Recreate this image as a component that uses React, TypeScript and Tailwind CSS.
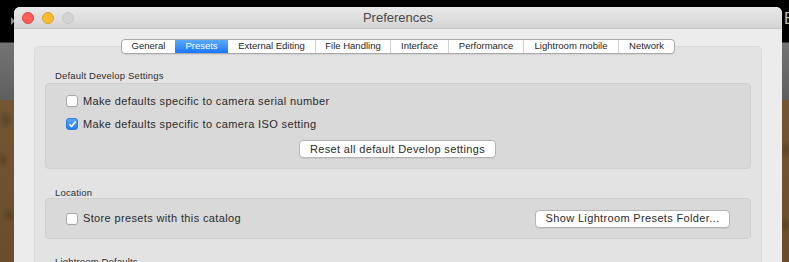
import React from "react";

const font = { fontFamily: '"Liberation Sans", Arial, sans-serif' };

function Checkbox({ checked }: { checked?: boolean }) {
  if (checked) {
    return (
      <div className="flex h-[12px] w-[12px] shrink-0 items-center justify-center rounded-[3px] bg-gradient-to-b from-[#5aa6ff] to-[#1e7cf5] border border-[#2b7de0]">
        <svg width="9" height="9" viewBox="0 0 9 9">
          <path d="M1.8 4.8 L3.6 6.6 L7.2 2" fill="none" stroke="white" strokeWidth="1.6" strokeLinecap="round" strokeLinejoin="round" />
        </svg>
      </div>
    );
  }
  return <div className="h-[12px] w-[12px] shrink-0 rounded-[3px] border border-[#a8a8a8] bg-white shadow-[0_0.5px_0_rgba(0,0,0,0.08)]" />;
}

function Btn({ children, className }: { children: React.ReactNode; className?: string }) {
  return (
    <div className={"flex h-[18px] items-center justify-center rounded-[4px] border border-[#b5b5b5] bg-white text-[11px] tracking-[0.35px] text-[#2b2b2b] shadow-[0_1px_0_rgba(0,0,0,0.06)] " + (className ?? "")}>
      {children}
    </div>
  );
}

const tabs: { label: string; w: number }[] = [
  { label: "General", w: 53 },
  { label: "Presets", w: 53 },
  { label: "External Editing", w: 87 },
  { label: "File Handling", w: 75 },
  { label: "Interface", w: 58 },
  { label: "Performance", w: 75 },
  { label: "Lightroom mobile", w: 95 },
  { label: "Network", w: 56 },
];

export default function App() {
  return (
    <div
      className="relative h-[262px] w-[789px] overflow-hidden bg-[linear-gradient(to_bottom,#000_0px,#000_42px,#3a3a3a_42px,#3a3a3a_43px,#737373_43px,#5f5f5f_100px,#735632_100px,#6a4e2c_262px)]"
      style={font}
    >
      {/* desktop bits */}
      <div className="absolute left-[11px] top-[17px] h-0 w-0 border-y-[4px] border-l-[4px] border-y-transparent border-l-[#8a8a8a]" />
      <div className="absolute left-[784px] top-[11px] text-[16px] leading-none text-[#bdbdbd]">E</div>
      <div className="absolute inset-x-0 top-[100px] h-[162px] bg-[radial-gradient(ellipse_8px_10px_at_6px_20px,rgba(45,35,18,0.35),transparent),radial-gradient(ellipse_7px_9px_at_3px_60px,rgba(45,35,18,0.3),transparent),radial-gradient(ellipse_8px_8px_at_9px_115px,rgba(45,35,18,0.3),transparent),radial-gradient(ellipse_6px_10px_at_786px_50px,rgba(45,35,18,0.3),transparent),radial-gradient(ellipse_6px_9px_at_785px_125px,rgba(45,35,18,0.3),transparent)]" />

      {/* window */}
      <div className="relative ml-[14px] mt-[7px] w-[768px] overflow-hidden rounded-t-[6px] bg-[#ececec]">
        {/* title bar */}
        <div className="relative flex h-[22px] items-center border-b border-[#c4c4c4] bg-gradient-to-b from-[#e9e9e9] to-[#d5d5d5]">
          <div className="flex items-center gap-[8px] pl-[8px]">
            <div className="h-[12px] w-[12px] rounded-full border border-[#e0443e] bg-[#fc5f57]" />
            <div className="h-[12px] w-[12px] rounded-full border border-[#dea123] bg-[#fdbc2e]" />
            <div className="h-[12px] w-[12px] rounded-full border border-[#c8c8c8] bg-[#d3d3d3]" />
          </div>
          <div className="absolute inset-x-0 top-0 flex h-[22px] items-center justify-center text-[13px] text-[#4a4a4a]">Preferences</div>
        </div>

        {/* body */}
        <div className="px-[20px] pt-[10px]">
          <div className="relative z-10 flex justify-center">
            <div className="flex h-[15px] overflow-hidden rounded-[4px] border border-[#a9a9a9] bg-white shadow-[0_1px_1px_rgba(0,0,0,0.08)]">
              {tabs.map((t, i) => (
                <div
                  key={t.label}
                  style={{ width: t.w }}
                  className={
                    "flex items-center justify-center text-[9.5px] " +
                    (t.label === "Presets"
                      ? "bg-gradient-to-b from-[#5aa9ff] to-[#1a75fe] text-white"
                      : "text-[#262626] " + (i > 0 && i !== 2 ? "border-l border-[#d2d2d2]" : ""))
                  }
                >
                  {t.label}
                </div>
              ))}
            </div>
          </div>

          <div className="-mt-[8px] rounded-t-[5px] border border-[#dadada] bg-[#e3e3e3] px-[10px] pb-[20px] pt-[24px]">
            {/* Default Develop Settings */}
            <div className="pl-[10px] text-[9.5px] leading-[10px] tracking-[0.17px] text-[#2e2e2e]">Default Develop Settings</div>
            <div className="mt-[2px] h-[86px] rounded-[4px] border border-[#d0d0d0] bg-[#d9d9d9] pl-[20px] pt-[11px]">
              <div className="flex h-[12px] items-center gap-[5px] text-[11px] tracking-[0.36px] text-[#2b2b2b]">
                <Checkbox />
                <span>Make defaults specific to camera serial number</span>
              </div>
              <div className="mt-[11px] flex h-[12px] items-center gap-[5px] text-[11px] tracking-[0.36px] text-[#2b2b2b]">
                <Checkbox checked />
                <span>Make defaults specific to camera ISO setting</span>
              </div>
              <div className="mt-[10px] flex">
                <Btn className="ml-[233px] w-[197px]">Reset all default Develop settings</Btn>
              </div>
            </div>

            {/* Location */}
            <div className="mt-[19px] pl-[10px] text-[9.5px] leading-[10px] tracking-[0.17px] text-[#2e2e2e]">Location</div>
            <div className="mt-0 flex h-[41px] items-center justify-between rounded-[4px] border border-[#d0d0d0] bg-[#d9d9d9] pl-[20px] pr-[20px]">
              <div className="flex items-center gap-[5px] text-[11px] tracking-[0.36px] text-[#2b2b2b]">
                <Checkbox />
                <span>Store presets with this catalog</span>
              </div>
              <Btn className="w-[195px]">Show Lightroom Presets Folder...</Btn>
            </div>

            <div className="mt-[18px] pl-[10px] text-[9.5px] leading-[10px] tracking-[0.17px] text-[#2e2e2e]">Lightroom Defaults</div>
          </div>
        </div>
      </div>
    </div>
  );
}
